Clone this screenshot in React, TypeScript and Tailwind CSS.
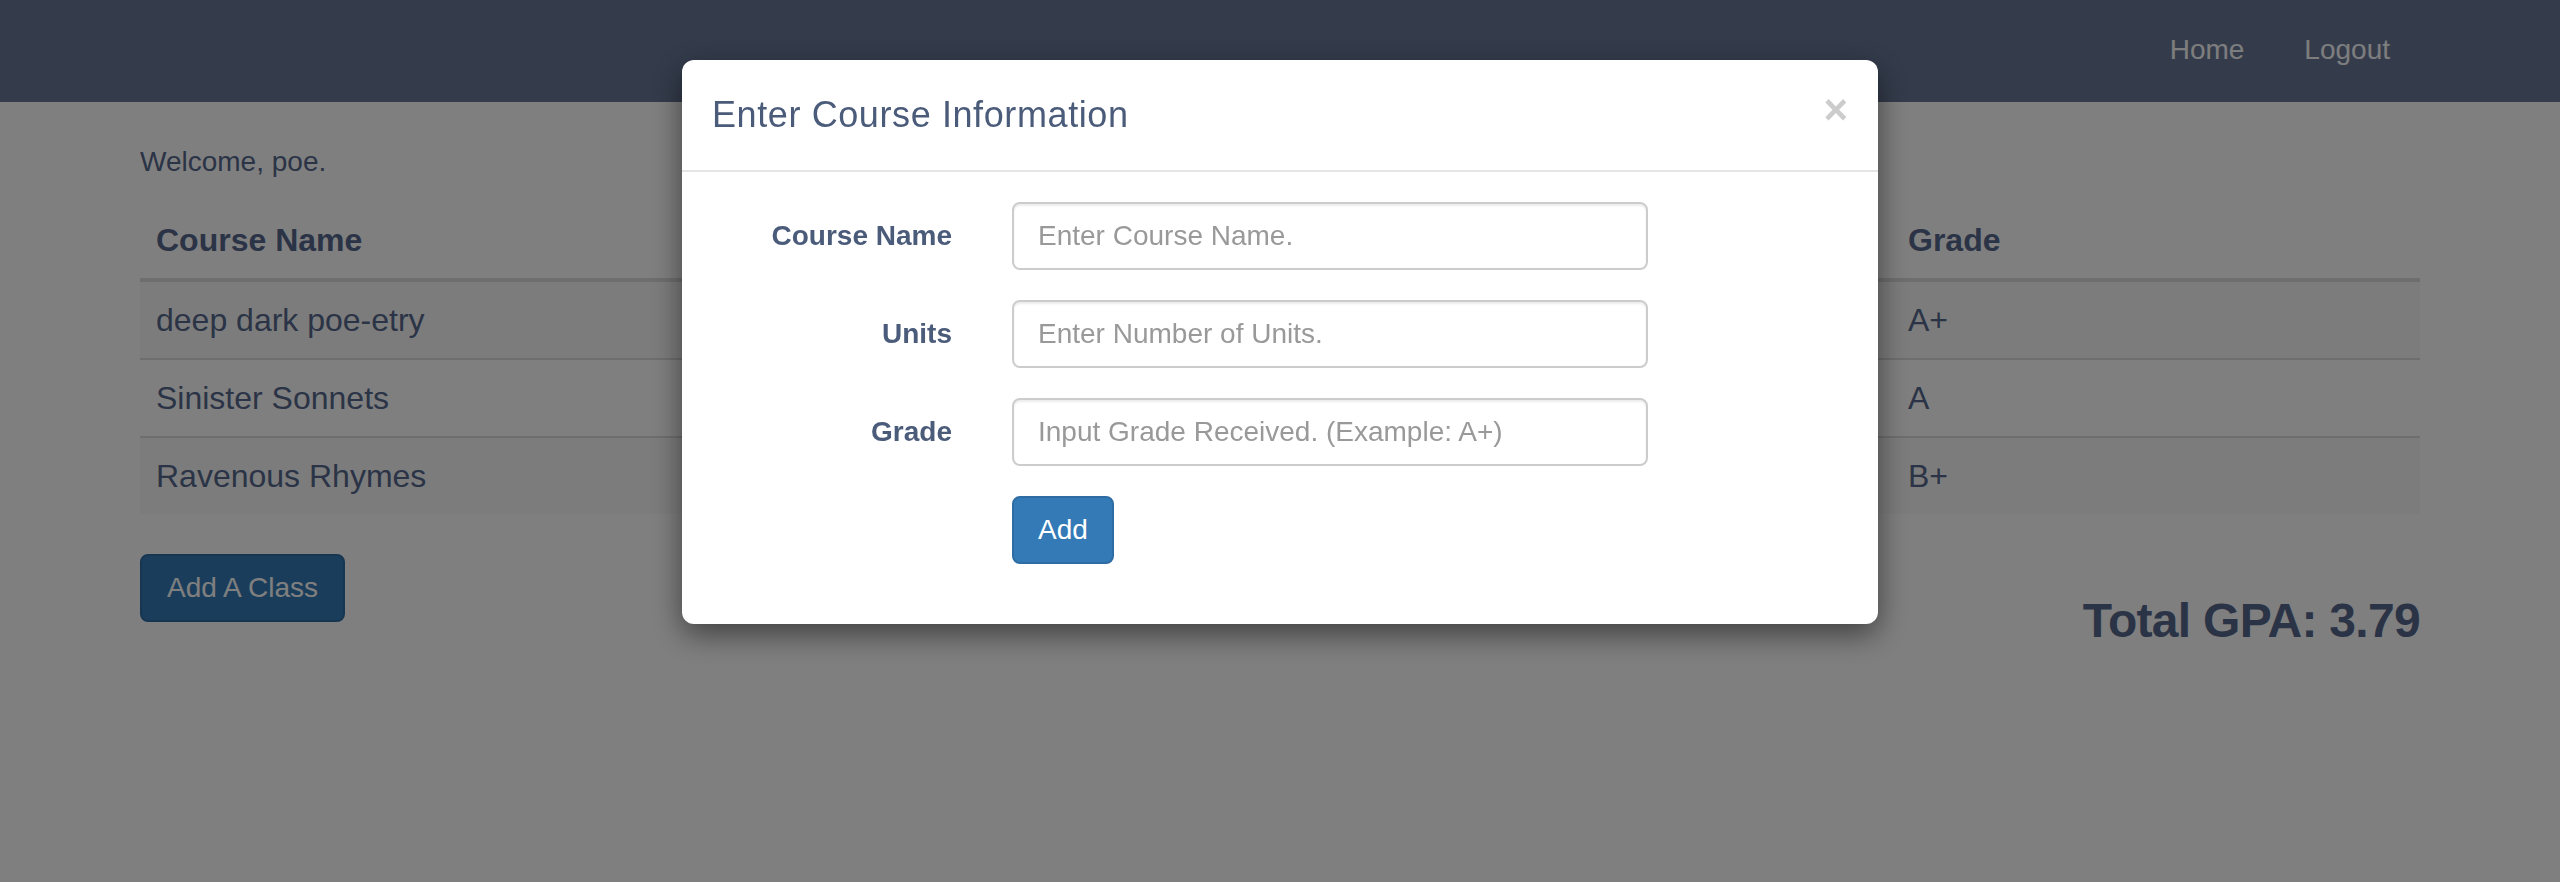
import React from 'react'

// =============================================
// Daten
// =============================================

interface Course {
  name: string
  units: number
  grade: string
}

const COURSES: Course[] = [
  { name: 'deep dark poe-etry', units: 4, grade: 'A+' },
  { name: 'Sinister Sonnets', units: 4, grade: 'A' },
  { name: 'Ravenous Rhymes', units: 3, grade: 'B+' },
]

// =============================================
// Navbar
// =============================================

function Navbar() {
  return (
    <nav className="h-[102px] bg-[#687897]">
      <div className="mx-auto flex w-[2340px] justify-end px-[30px]">
        <ul className="flex">
          {['Home', 'Logout'].map((item) => (
            <li key={item}>
              <a className="block px-[30px] pt-[30px] text-[28px] leading-[40px] text-[#fbfbfd]" href="#">
                {item}
              </a>
            </li>
          ))}
        </ul>
      </div>
    </nav>
  )
}

// =============================================
// Kurstabelle
// =============================================

function CourseTable() {
  return (
    <div className="mb-[40px] text-[32px] leading-[44px]">
      <div className="flex border-b-4 border-[#dddddd] font-bold">
        <div className="w-[876px] p-[16px]">Course Name</div>
        <div className="w-[876px] p-[16px]">Units</div>
        <div className="flex-1 p-[16px]">Grade</div>
      </div>
      {COURSES.map((c, i) => (
        <div
          key={c.name}
          className={
            i % 2 === 0
              ? i === 0
                ? 'flex bg-[#f9f9f9]'
                : 'flex border-t-2 border-[#dddddd] bg-[#f9f9f9]'
              : 'flex border-t-2 border-[#dddddd]'
          }
        >
          <div className="w-[876px] p-[16px]">{c.name}</div>
          <div className="w-[876px] p-[16px]">{c.units}</div>
          <div className="flex-1 p-[16px]">{c.grade}</div>
        </div>
      ))}
    </div>
  )
}

// =============================================
// Modal
// =============================================

interface FieldProps {
  label: string
  placeholder: string
}

function Field({ label, placeholder }: FieldProps) {
  return (
    <div className="mb-[30px] flex items-start">
      <label className="w-[240px] pt-[14px] text-right text-[28px] leading-[40px] font-bold">{label}</label>
      <input
        className="ml-[60px] h-[68px] w-[636px] rounded-[8px] border-2 border-[#cccccc] px-[24px] text-[28px] text-[#555555] shadow-[inset_0_2px_2px_rgba(0,0,0,0.075)] outline-none placeholder:text-[#999999]"
        placeholder={placeholder}
      />
    </div>
  )
}

function CourseModal() {
  return (
    <div className="fixed inset-0 z-20 flex justify-center">
      <div className="mt-[60px] h-fit w-[1196px] rounded-[12px] bg-white text-[#4b5b7a] shadow-[0_10px_30px_rgba(0,0,0,0.5)]">
        {/* Header */}
        <div className="flex items-start justify-between border-b-2 border-[#e5e5e5] p-[30px]">
          <h4 className="text-[36px] leading-[50px] tracking-[0.6px]">Enter Course Information</h4>
          <button className="-mt-[1px] text-[42px] leading-[42px] font-bold text-[#cccccc]">×</button>
        </div>

        {/* Formular */}
        <div className="p-[30px]">
          <Field label="Course Name" placeholder="Enter Course Name." />
          <Field label="Units" placeholder="Enter Number of Units." />
          <Field label="Grade" placeholder="Input Grade Received. (Example: A+)" />
          <div className="mb-[30px] pl-[300px]">
            <button className="h-[68px] rounded-[8px] border-2 border-[#2e6da4] bg-[#337ab7] px-[24px] text-[28px] leading-[40px] text-white">
              Add
            </button>
          </div>
        </div>
      </div>
    </div>
  )
}

// =============================================
// App
// =============================================

export default function App() {
  return (
    <div className="relative min-h-[882px] bg-white font-['Liberation_Sans',Arial,sans-serif] text-[#56688c]">
      <Navbar />

      <div className="mx-auto mt-[40px] w-[2340px] px-[30px]">
        <p className="mb-[20px] text-[28px] leading-[40px]">Welcome, poe.</p>

        <CourseTable />

        <div className="flex items-start justify-between">
          <button className="h-[68px] rounded-[8px] border-2 border-[#2e6da4] bg-[#337ab7] px-[25px] text-[28px] leading-[40px] text-white">
            Add A Class
          </button>
          <h3 className="mt-[41px] text-[48px] leading-[52px] font-bold tracking-[-0.7px]">Total GPA: 3.79</h3>
        </div>
      </div>

      {/* Backdrop */}
      <div className="fixed inset-0 z-10 bg-black/50" />

      <CourseModal />
    </div>
  )
}
